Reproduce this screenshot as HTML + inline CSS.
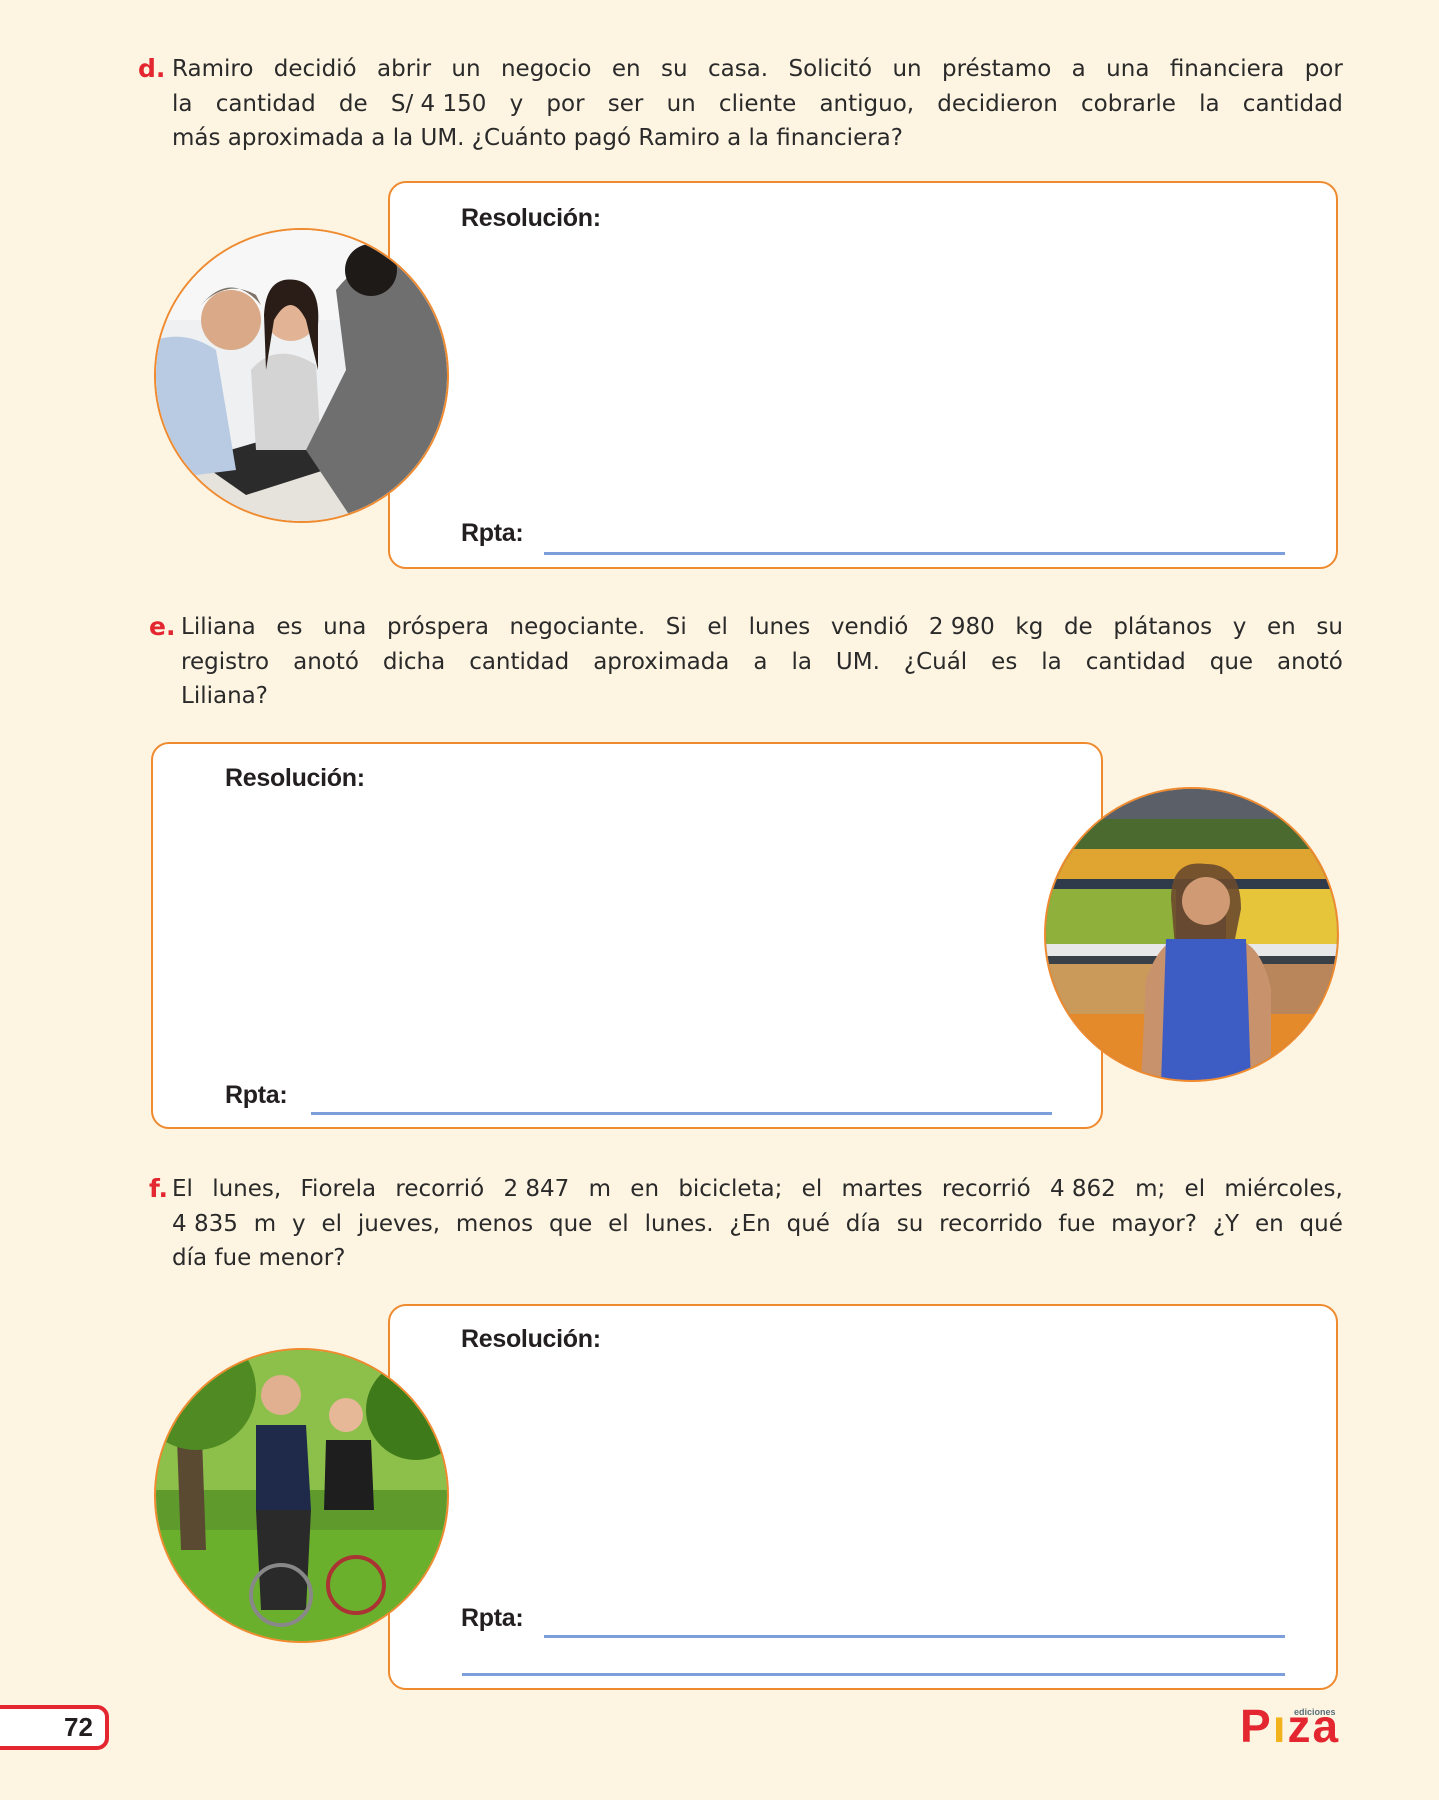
<!DOCTYPE html>
<html><head><meta charset="utf-8"><style>
*{margin:0;padding:0;box-sizing:border-box}
body{width:1439px;height:1800px;background:#fdf4e2;position:relative;overflow:hidden;font-family:"Liberation Sans",sans-serif;color:#2a2a2a}
.q{position:absolute;font-family:"DejaVu Sans",sans-serif;font-size:23px;line-height:34.5px;color:#2a2a2a}
.q .l{white-space:nowrap;display:flex;justify-content:space-between}
.q .last{text-align:left}
.lab{position:absolute;font-weight:bold;color:#e3262f;font-size:25px;line-height:34.5px;font-family:"DejaVu Sans",sans-serif}
.box{position:absolute;background:#fff;border:2.5px solid #ef8a2e;border-radius:18px}
.b{position:absolute;font-weight:bold;font-size:25px;color:#231f20;letter-spacing:-0.3px}
.ln{position:absolute;height:3px;background:#7c9fdc}
.circ{position:absolute;border-radius:50%;border:2.5px solid #ef8a2e;overflow:hidden}
</style></head><body>

<div class="lab" style="left:138px;top:52px">d.</div>
<div class="q" style="left:172px;top:52px;width:1171px">
<div class="l"><span>Ramiro</span><span>decidió</span><span>abrir</span><span>un</span><span>negocio</span><span>en</span><span>su</span><span>casa.</span><span>Solicitó</span><span>un</span><span>préstamo</span><span>a</span><span>una</span><span>financiera</span><span>por</span></div>
<div class="l"><span>la</span><span>cantidad</span><span>de</span><span>S/ 4 150</span><span>y</span><span>por</span><span>ser</span><span>un</span><span>cliente</span><span>antiguo,</span><span>decidieron</span><span>cobrarle</span><span>la</span><span>cantidad</span></div>
<div class="last">más aproximada a la UM. ¿Cuánto pagó Ramiro a la financiera?</div>
</div>

<div class="box" style="left:388px;top:181px;width:950px;height:388px"></div>
<div class="b" style="left:461px;top:204px">Resolución:</div>
<div class="b" style="left:461px;top:519px">Rpta:</div>
<div class="ln" style="left:544px;top:552px;width:741px"></div>
<div class="circ" style="left:154px;top:228px;width:295px;height:295px">
<svg width="295" height="295" viewBox="0 0 295 295">
<rect width="295" height="295" fill="#eef0f2"/>
<rect x="0" y="0" width="295" height="90" fill="#f7f7f7"/>
<path d="M0 230 L295 190 L295 295 L0 295Z" fill="#e6e2dc"/>
<path d="M40 230 L160 195 L200 230 L90 265Z" fill="#2b2b2b"/>
<path d="M0 110 Q30 100 60 120 L80 240 L0 250Z" fill="#b9cbe3"/>
<circle cx="75" cy="90" r="30" fill="#d9a988"/>
<path d="M45 75 Q75 40 105 75 L100 65 Q75 50 50 70Z" fill="#7f7367"/>
<path d="M95 140 Q120 110 160 135 L165 220 L100 220Z" fill="#d4d4d4"/>
<circle cx="135" cy="85" r="26" fill="#e2b495"/>
<path d="M108 85 Q110 45 140 50 Q165 55 162 95 L162 140 L150 90 Q135 60 118 90 L110 140Z" fill="#2a1d18"/>
<path d="M180 60 Q220 10 260 40 L295 60 L295 295 L200 295 L150 220 L190 140Z" fill="#6f6f6f"/>
<circle cx="215" cy="40" r="26" fill="#1e1a18"/>
</svg></div>

<div class="lab" style="left:149px;top:610px">e.</div>
<div class="q" style="left:181px;top:610px;width:1162px">
<div class="l"><span>Liliana</span><span>es</span><span>una</span><span>próspera</span><span>negociante.</span><span>Si</span><span>el</span><span>lunes</span><span>vendió</span><span>2 980</span><span>kg</span><span>de</span><span>plátanos</span><span>y</span><span>en</span><span>su</span></div>
<div class="l"><span>registro</span><span>anotó</span><span>dicha</span><span>cantidad</span><span>aproximada</span><span>a</span><span>la</span><span>UM.</span><span>¿Cuál</span><span>es</span><span>la</span><span>cantidad</span><span>que</span><span>anotó</span></div>
<div class="last">Liliana?</div>
</div>

<div class="box" style="left:151px;top:742px;width:952px;height:387px"></div>
<div class="b" style="left:225px;top:764px">Resolución:</div>
<div class="b" style="left:225px;top:1081px">Rpta:</div>
<div class="ln" style="left:311px;top:1112px;width:741px"></div>
<div class="circ" style="left:1044px;top:787px;width:295px;height:295px">
<svg width="295" height="295" viewBox="0 0 295 295">
<rect width="295" height="295" fill="#3a4048"/>
<rect y="0" width="295" height="40" fill="#5b6068"/>
<rect y="30" width="295" height="60" fill="#4b6a30"/>
<rect y="60" width="295" height="30" fill="#e0a431"/>
<rect y="90" width="295" height="10" fill="#2f3a4a"/>
<rect y="100" width="130" height="55" fill="#8fb03a"/>
<rect x="180" y="100" width="115" height="60" fill="#e7c53a"/>
<rect y="155" width="295" height="12" fill="#e8e8e8"/>
<rect y="175" width="110" height="50" fill="#c99a5a"/>
<rect x="210" y="175" width="85" height="50" fill="#b8865a"/>
<rect y="225" width="295" height="70" fill="#e58a2a"/>
<path d="M125 110 Q125 70 160 75 Q195 75 195 120 L185 170 L130 170Z" fill="#6b4a2e" opacity=".9"/>
<circle cx="160" cy="112" r="24" fill="#cf9a74"/>
<path d="M100 190 Q115 150 135 150 L190 150 Q215 155 225 200 L225 295 L95 295Z" fill="#c8926d"/>
<path d="M120 150 L200 150 L205 295 L115 295Z" fill="#3d5cc4"/>
</svg></div>

<div class="lab" style="left:149px;top:1172px">f.</div>
<div class="q" style="left:172px;top:1172px;width:1171px">
<div class="l"><span>El</span><span>lunes,</span><span>Fiorela</span><span>recorrió</span><span>2 847</span><span>m</span><span>en</span><span>bicicleta;</span><span>el</span><span>martes</span><span>recorrió</span><span>4 862</span><span>m;</span><span>el</span><span>miércoles,</span></div>
<div class="l"><span>4 835</span><span>m</span><span>y</span><span>el</span><span>jueves,</span><span>menos</span><span>que</span><span>el</span><span>lunes.</span><span>¿En</span><span>qué</span><span>día</span><span>su</span><span>recorrido</span><span>fue</span><span>mayor?</span><span>¿Y</span><span>en</span><span>qué</span></div>
<div class="last">día fue menor?</div>
</div>

<div class="box" style="left:388px;top:1304px;width:950px;height:386px"></div>
<div class="b" style="left:461px;top:1325px">Resolución:</div>
<div class="b" style="left:461px;top:1604px">Rpta:</div>
<div class="ln" style="left:544px;top:1635px;width:741px"></div>
<div class="ln" style="left:462px;top:1673px;width:823px"></div>
<div class="circ" style="left:154px;top:1348px;width:295px;height:295px">
<svg width="295" height="295" viewBox="0 0 295 295">
<rect width="295" height="295" fill="#5f9a2c"/>
<rect width="295" height="140" fill="#8dc04a"/>
<rect y="180" width="295" height="115" fill="#6bb02c"/>
<path d="M20 60 L45 60 L50 200 L25 200Z" fill="#5a4a32"/>
<circle cx="40" cy="40" r="60" fill="#4f8a22"/>
<circle cx="260" cy="60" r="50" fill="#3f7a1a"/>
<circle cx="125" cy="45" r="20" fill="#e0b090"/>
<path d="M100 75 L150 75 L155 160 L100 160Z" fill="#1f2a4a"/>
<path d="M100 160 L155 160 L150 260 L105 260Z" fill="#2a2a2a"/>
<circle cx="190" cy="65" r="17" fill="#e6b898"/>
<path d="M170 90 L215 90 L218 160 L168 160Z" fill="#1e1e1e"/>
<circle cx="125" cy="245" r="30" fill="none" stroke="#888" stroke-width="4"/>
<circle cx="200" cy="235" r="28" fill="none" stroke="#a33" stroke-width="4"/>
</svg></div>

<div style="position:absolute;left:-20px;top:1705px;width:129px;height:45px;border:4px solid #e3262f;border-radius:12px;background:#fff"></div>
<div style="position:absolute;left:64px;top:1712px;font-weight:bold;font-size:26px;color:#231f20">72</div>

<div style="position:absolute;left:1294px;top:1707px;font-size:9px;font-weight:bold;color:#5a6f7a">ediciones</div>
<div style="position:absolute;left:1240px;top:1704px;font-size:46px;font-weight:bold;color:#e3262f;letter-spacing:2px;line-height:44px">P<span style="color:#f2b21c">ı</span>za</div>
</body></html>
